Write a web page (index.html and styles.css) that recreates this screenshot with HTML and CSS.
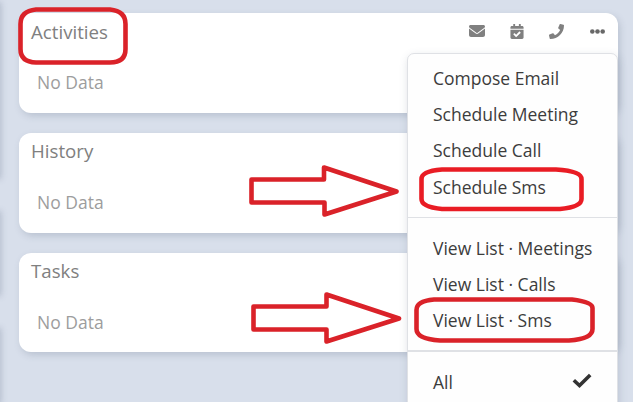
FILE: index.html
```html
<!DOCTYPE html>
<html lang="en">
<head>
<meta charset="utf-8">
<title>Activities</title>
<link rel="stylesheet" href="styles.css">
</head>
<body>
<div class="page">
  <div class="neighbours"><div class="n1"></div><div class="n2"></div><div class="n3"></div></div>
  <main class="panels">
    <section class="panel">
      <header><h2>Activities</h2>
        <div class="actions">
          <svg class="mail" viewBox="0 0 512 384"><path d="M48 0C22 0 0 22 0 48c0 15 7 29 19 38l218 164c11 8 27 8 38 0L493 86c12-9 19-23 19-38 0-26-22-48-48-48zM0 112v208c0 35 29 64 64 64h384c35 0 64-29 64-64V112L294 275c-23 17-53 17-76 0z"/></svg>
          <svg class="cal" viewBox="0 0 448 512"><path fill-rule="evenodd" d="M96 12c0-7 5-12 12-12h40c7 0 12 5 12 12v52h128V12c0-7 5-12 12-12h40c7 0 12 5 12 12v52h48c26 0 48 22 48 48v48H0v-48c0-26 22-48 48-48h48zM0 192h448v272c0 26-22 48-48 48H48c-26 0-48-22-48-48zm345 94-28-28c-5-5-12-5-17 0L194 363l-46-46c-5-5-12-5-17 0l-28 28c-5 5-5 12 0 17l83 83c5 5 12 5 17 0l142-142c5-5 5-12 0-17z"/></svg>
          <svg class="phone" viewBox="0 0 512 512"><path d="M493.400 24.600l-104-24c-11.300-2.600-22.900 3.300-27.500 13.900l-48 112c-4.200 9.800-1.400 21.300 6.900 28l60.600 49.600c-36 76.700-98.900 140.500-177.200 177.200l-49.600-60.600c-6.800-8.300-18.200-11.100-28-6.900l-112 48C3.900 366.500-2 378.100.600 389.400l24 104C27.100 504.200 36.700 512 48 512c256.100 0 464-207.500 464-464 0-11.200-7.700-20.900-18.600-23.400z"/></svg>
          <svg class="dots" viewBox="0 0 15 5"><circle cx="2.300" cy="2.500" r="2.300"/><circle cx="7.500" cy="2.500" r="2.300"/><circle cx="12.700" cy="2.500" r="2.300"/></svg>
        </div>
      </header>
      <p>No Data</p>
    </section>
    <section class="panel"><header><h2>History</h2></header><p>No Data</p></section>
    <section class="panel last"><header><h2>Tasks</h2></header><p>No Data</p></section>
  </main>
  <div class="menu">
    <ul>
      <li>Compose Email</li><li>Schedule Meeting</li><li>Schedule Call</li><li>Schedule Sms</li>
    </ul>
    <ul>
      <li>View List · Meetings</li><li>View List · Calls</li><li>View List · Sms</li>
    </ul>
    <ul>
      <li><span>All</span><svg class="check" viewBox="0 0 20 15"><path d="M1.800 7.200 7.500 12.500 18.200 2"/></svg></li>
    </ul>
  </div>
  <svg class="marks" viewBox="0 0 633 402">
    <path d="M36 9.500H110Q125.500 11 125.500 24V49Q125.500 62.500 110 62.500H36Q20.500 62 20.500 49V24Q20.500 11 36 9.500Z"/>
    <path class="bright" d="M442 169.500H556Q581.500 171 581.500 179V199Q581.500 207 560 209H442Q421.500 207 421.500 199V179Q421.500 171 442 169.500Z"/>
    <path d="M434 299.500H572Q592.500 302 592.500 308V329Q592.500 339 569 340.500H440Q416.500 339 416.500 329V310Q416.500 301 434 299.500Z"/>
    <path d="M251.500 179.500H324V167.500L396.500 191.500 324.500 214.500V202.500H251.500Z"/>
    <path d="M253.500 306.500H326.500V294.500L399 318.500 326.500 341.500V329.500H253.500Z"/>
  </svg>
</div>
</body>
</html>
```
FILE: styles.css
```css
* { box-sizing: border-box; }
body { margin: 0; font-family: "Open Sans", sans-serif; font-size: 17.5px; font-weight: 400; }
.page { position: relative; width: 633px; height: 402px; overflow: hidden; background: #d8dfeb; }
.panels { display: flex; flex-direction: column; gap: 20px; padding: 13px 15px 0 19px; }
.panel { height: 100px; padding: 6px 13px 0 12px; background: #fff; border-radius: 12px; box-shadow: 2px 3px 7px rgba(80, 95, 120, .22); }
.panel.last { height: 99px; }
.panel header { display: flex; justify-content: space-between; height: 26px; }
.panel:nth-child(n + 2) { padding-top: 5px; }
.panel:nth-child(n + 2) p { margin-top: 25px; }
h2 { margin: 0; font-size: 18.7px; line-height: 26px; font-weight: 400; color: #808080; }
.panel p { margin: 24px 0 0 6px; line-height: 26px; color: #9d9d9d; }
.actions { display: flex; align-items: center; fill: #808080; }
.mail { width: 16px; height: 12px; margin-right: 25px; }
.cal { width: 14px; height: 15px; margin-right: 25px; }
.phone { width: 15px; height: 15px; margin-right: 26px; }
.dots { width: 15px; height: 5px; fill: #686868; }
.actions svg { position: relative; top: -1px; }
.menu { position: absolute; left: 407px; top: 53px; width: 211px; height: 370px; background: #fefefe; border: 1px solid #dfe1e5; border-radius: 7px; box-shadow: 1px 3px 8px rgba(80, 95, 120, .22); color: #3c3c3c; }
.menu ul { margin: 0; padding: 12px 25px 12px; list-style: none; }
.menu ul:first-child { padding: 6px 25px 13px; }
.menu ul:first-child li:last-child { padding-top: 1px; }
.menu ul + ul { border-top: 1px solid #dfe1e5; }
.menu ul:last-child { border-top-width: 2px; }
.menu li { display: flex; align-items: center; justify-content: space-between; height: 36px; white-space: nowrap; }
.check { width: 20px; height: 15px; margin-top: -3px; fill: none; stroke: #333; stroke-width: 3.6; }
.neighbours { position: absolute; left: -10px; top: 0; width: 10px; height: 402px; display: flex; flex-direction: column; gap: 32px; }
.neighbours div { box-shadow: 1px 2px 6px rgba(80, 95, 120, .28); }
.n1 { height: 187px; }
.n2 { height: 90px; }
.n3 { height: 80px; }
.marks { position: absolute; left: 0; top: 0; width: 633px; height: 402px; fill: none; stroke: #da2229; stroke-width: 4.600; stroke-linejoin: round; pointer-events: none; }
.bright { stroke: #e91c24; }
```
